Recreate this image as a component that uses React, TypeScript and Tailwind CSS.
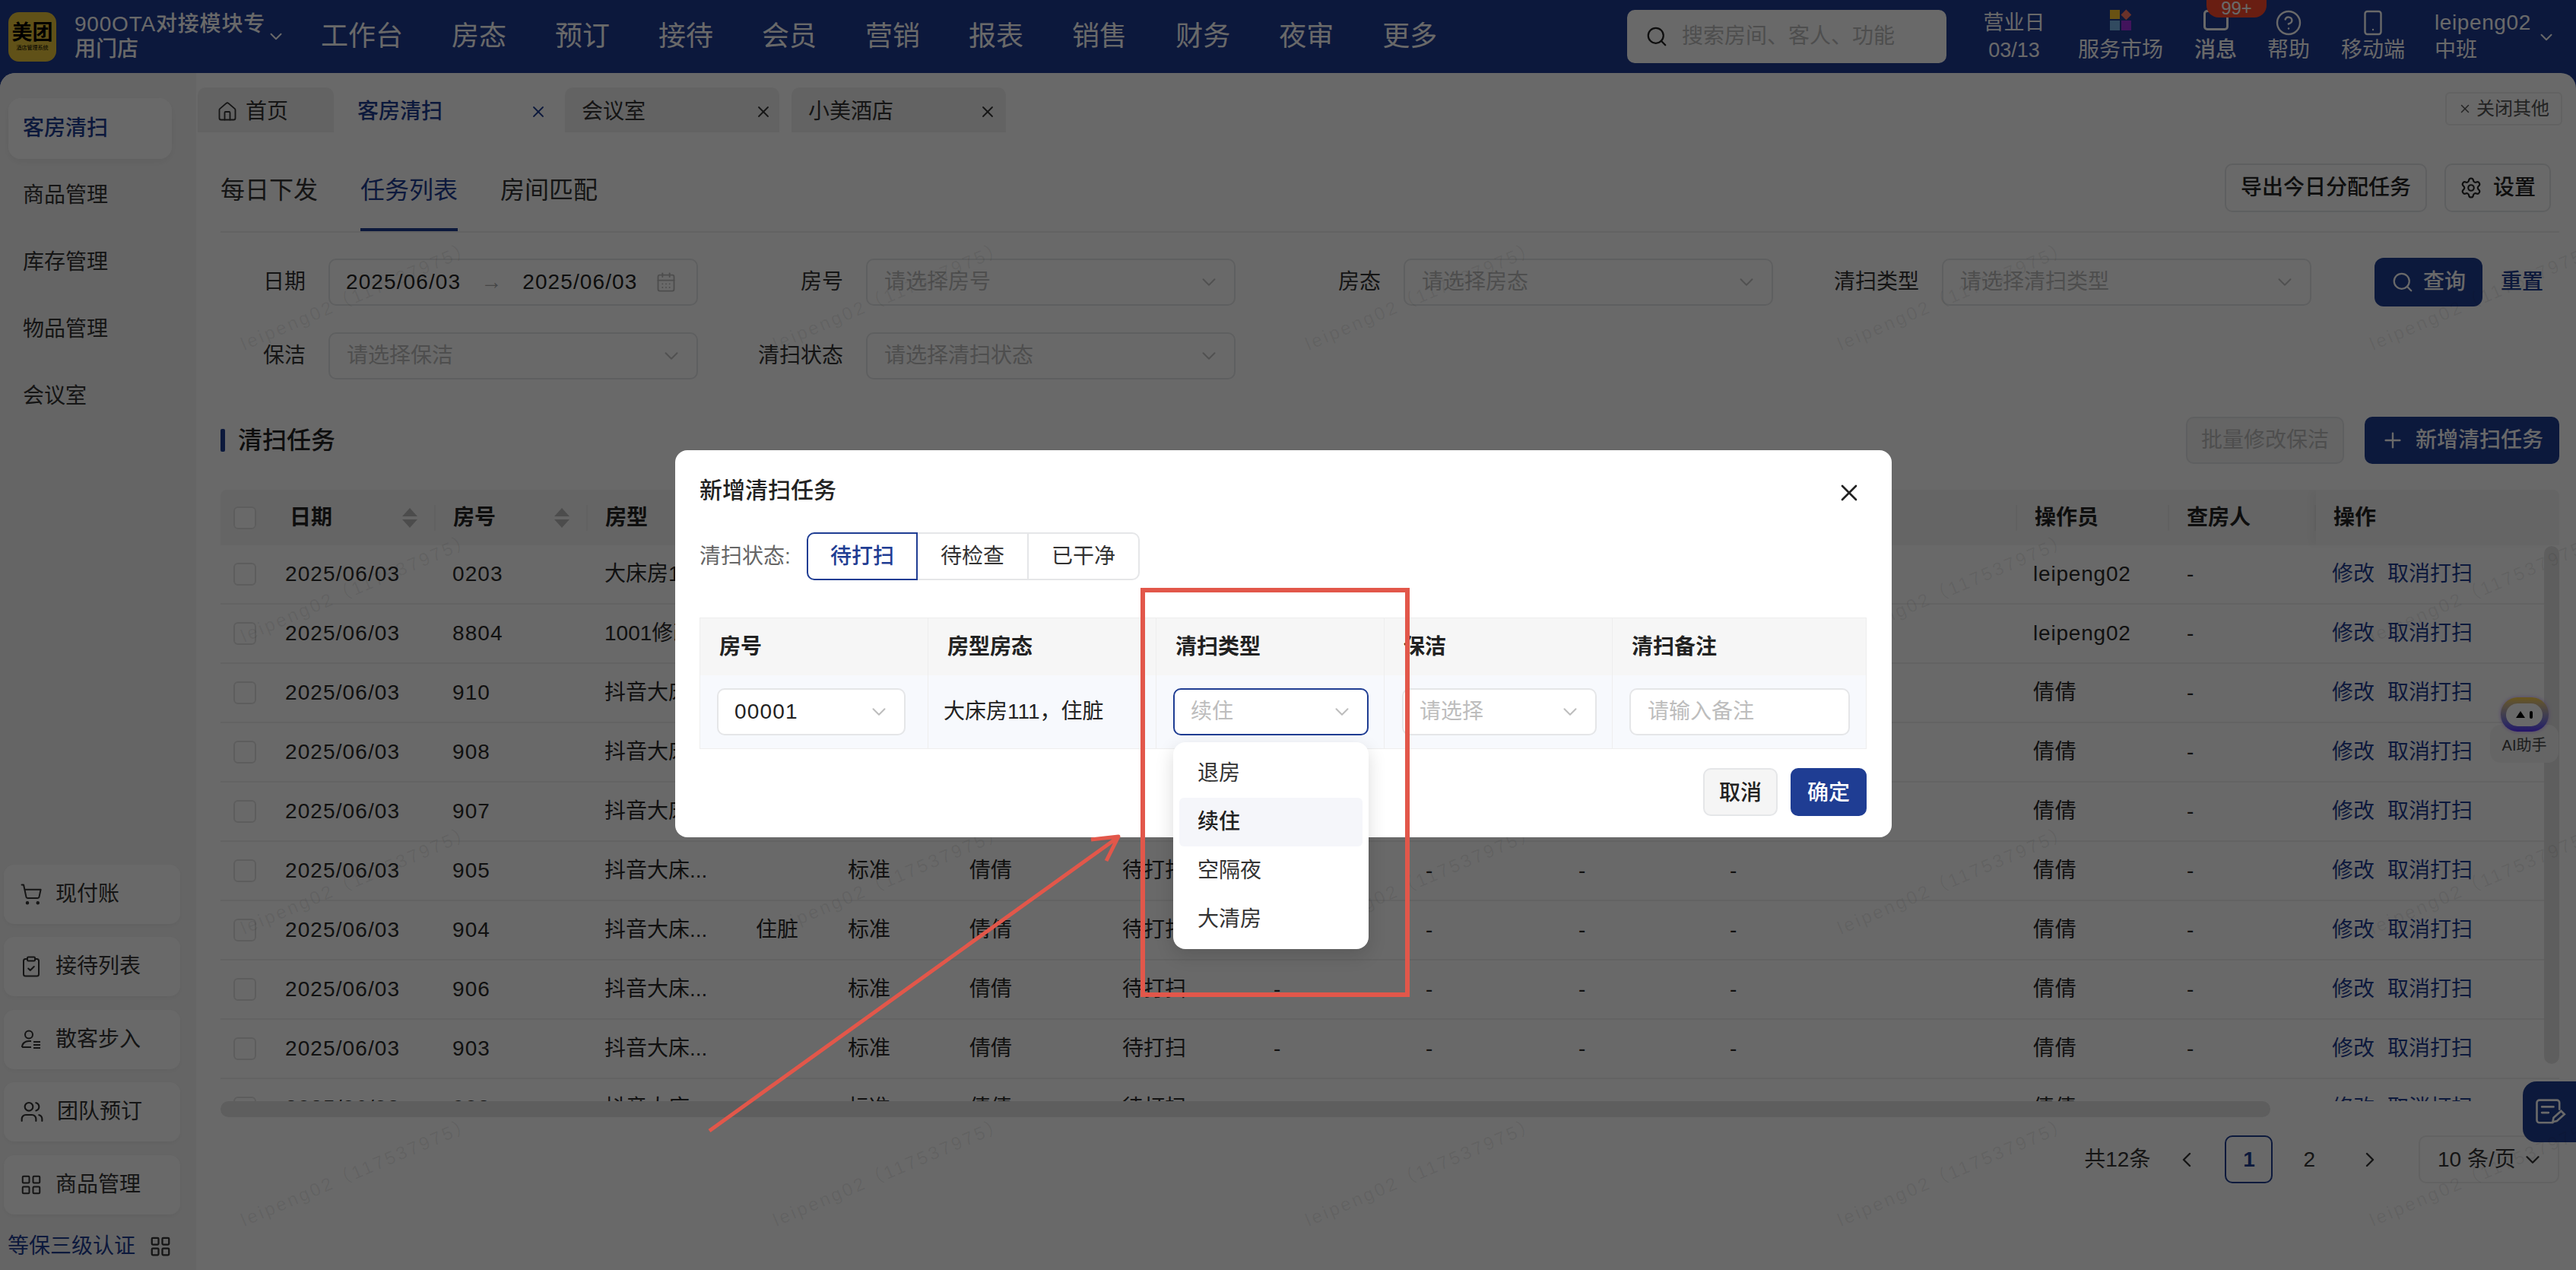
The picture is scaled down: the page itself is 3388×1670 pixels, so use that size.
import {
  ChevronDown,
  ChevronLeft,
  ChevronRight,
  CircleHelp,
  CalendarDays,
  ClipboardCheck,
  House,
  LayoutGrid,
  Plus,
  Search,
  Settings,
  ShoppingCart,
  Smartphone,
  Users,
  X,
} from "lucide-react";

const navItems = ["工作台", "房态", "预订", "接待", "会员", "营销", "报表", "销售", "财务", "夜审", "更多"];
const sideItems = ["客房清扫", "商品管理", "库存管理", "物品管理", "会议室"];
const rooms = [
  { date: "2025/06/03", no: "0203", type: "大床房111", state: "住脏", staff: "leipeng02" },
  { date: "2025/06/03", no: "8804", type: "1001修改", state: "", staff: "leipeng02" },
  { date: "2025/06/03", no: "910", type: "抖音大床...", state: "", staff: "倩倩" },
  { date: "2025/06/03", no: "908", type: "抖音大床...", state: "", staff: "倩倩" },
  { date: "2025/06/03", no: "907", type: "抖音大床...", state: "", staff: "倩倩" },
  { date: "2025/06/03", no: "905", type: "抖音大床...", state: "", staff: "倩倩" },
  { date: "2025/06/03", no: "904", type: "抖音大床...", state: "住脏", staff: "倩倩" },
  { date: "2025/06/03", no: "906", type: "抖音大床...", state: "", staff: "倩倩" },
  { date: "2025/06/03", no: "903", type: "抖音大床...", state: "", staff: "倩倩" },
  { date: "2025/06/03", no: "902", type: "抖音大床...", state: "", staff: "倩倩" },
];

const tableCols =
  "grid grid-cols-[68px_215px_200px_199px_121px_160px_201px_199px_200px_201px_199px_400px_200px_193px_320px]";

const Field = ({ label, placeholder }: { label: string; placeholder: string }) => (
  <div className="flex items-center justify-end gap-[30px]">
    <span className="text-[28px] text-[#333]">{label}</span>
    <div className="flex h-[62px] w-[486px] items-center justify-between rounded-[10px] border-2 border-[#e5e6e8] pl-[22px] pr-[18px] text-[28px] text-[#bdbdbd]">
      {placeholder}
      <ChevronDown className="h-[30px] w-[30px] text-[#c4c4c4]" strokeWidth={1.6} />
    </div>
  </div>
);

const SortIcon = () => (
  <span className="flex flex-col items-center gap-[4px]">
    <span className="h-0 w-0 border-x-[10px] border-b-[11px] border-x-transparent border-b-[#b9b9b9]" />
    <span className="h-0 w-0 border-x-[10px] border-t-[11px] border-x-transparent border-t-[#b9b9b9]" />
  </span>
);

const HeadCell = ({ label, sort, last }: { label?: string; sort?: boolean; last?: boolean }) => (
  <div
    className={`relative flex items-center justify-between pl-[23px] pr-[24px] text-[28px] font-bold text-[#222] ${
      last ? "shadow-[-10px_0_10px_rgba(0,0,0,0.03)]" : ""
    }`}
  >
    {label}
    {sort && <SortIcon />}
    {!last && <span className="absolute right-0 top-[20px] h-[34px] w-[2px] bg-[#ececec]" />}
  </div>
);

const SelectBox = ({ value, muted, active }: { value: string; muted?: boolean; active?: boolean }) => (
  <div
    className={`flex h-[62px] items-center justify-between rounded-[10px] border-2 bg-white pl-[21px] pr-[18px] text-[28px] ${
      active ? "border-[#1f3d93]" : "border-[#e5e6e8]"
    } ${muted ? "text-[#bdbdbd]" : "text-[#222]"}`}
  >
    <span className={muted ? "" : "tracking-[1.2px]"}>{value}</span>
    <ChevronDown className="h-[30px] w-[30px] text-[#bdbdbd]" strokeWidth={1.6} />
  </div>
);

export default function App() {
  return (
    <div className="relative h-[1670px] w-[3388px] overflow-hidden bg-[#1e3a93] font-['Liberation_Sans','Noto_Sans_CJK_SC',sans-serif]">
      {/* top bar */}
      <header className="flex h-[96px] items-center text-white">
        <div className="ml-[11px] flex h-[65px] w-[63px] flex-col items-center justify-center rounded-[14px] bg-[#e9c53a] text-black">
          <span className="text-[27px] font-bold leading-[30px]">美团</span>
          <span className="text-[7px] leading-[10px]">酒店管理系统</span>
        </div>
        <div className="ml-[24px] w-[262px] text-[28px] font-medium leading-[33px]">
          <div className="tracking-[0.8px]">900OTA对接模块专</div>
          <div>用门店</div>
        </div>
        <ChevronDown className="ml-[-10px] h-[26px] w-[26px]" strokeWidth={1.8} />
        <nav className="ml-[46px] flex gap-[64px] text-[36px]">
          {navItems.map((n) => (
            <span key={n}>{n}</span>
          ))}
        </nav>
        <div className="ml-auto flex h-[70px] w-[420px] items-center gap-[18px] rounded-[10px] bg-white pl-[24px] text-[28px] text-[#bdbdbd]">
          <Search className="h-[30px] w-[30px] text-[#222]" strokeWidth={1.8} />
          搜索房间、客人、功能
        </div>
        <div className="ml-[47px] flex w-[84px] flex-col items-center whitespace-nowrap text-[27px] leading-[36px]">
          <span>营业日</span>
          <span>03/13</span>
        </div>
        <div className="ml-[42px] flex w-[112px] flex-col items-center text-[28px]">
          <div className="grid h-[27px] w-[28px] grid-cols-2 gap-[2px]">
            <span className="bg-[#ffc72e]" />
            <span className="rotate-45 scale-75 bg-[#ff7a66]" />
            <span className="bg-[#78b4e8]" />
            <span className="bg-[#a030e0]" />
          </div>
          <span className="mt-[8px] leading-[36px]">服务市场</span>
        </div>
        <div className="relative ml-[40px] flex w-[58px] flex-col items-center text-[28px] font-medium">
          <div className="h-[27px] w-[33px] rounded-[5px] border-[3px] border-white" />
          <span className="absolute left-[17px] top-[-14px] flex h-[24px] w-[79px] items-center justify-center rounded-b-[16px] bg-[#ff4a2d] text-[24px]">
            99+
          </span>
          <span className="mt-[8px] leading-[36px]">消息</span>
        </div>
        <div className="ml-[39px] flex w-[56px] flex-col items-center text-[28px]">
          <CircleHelp className="h-[36px] w-[36px]" strokeWidth={1.6} />
          <span className="leading-[36px]">帮助</span>
        </div>
        <div className="ml-[41px] flex w-[84px] flex-col items-center text-[28px]">
          <Smartphone className="h-[36px] w-[36px]" strokeWidth={1.6} />
          <span className="leading-[36px]">移动端</span>
        </div>
        <div className="ml-[39px] w-[132px] text-[28px] leading-[36px]">
          <div className="tracking-[0.6px]">leipeng02</div>
          <div>中班</div>
        </div>
        <ChevronDown className="ml-[2px] mr-[26px] mt-[2px] h-[26px] w-[26px]" strokeWidth={1.8} />
      </header>

      <div className="flex h-[1574px] overflow-hidden rounded-t-[20px] bg-white">
        {/* left menu */}
        <aside className="flex w-[258px] shrink-0 flex-col justify-between bg-[#f6f6f6] pb-[10px] pl-[5px] pt-[33px]">
          <div className="flex flex-col gap-[8px]">
            {sideItems.map((s, i) => (
              <div
                key={s}
                className={`ml-[6px] flex h-[80px] w-[215px] items-center rounded-[16px] pl-[19px] text-[28px] ${
                  i === 0 ? "bg-white font-medium text-[#1f3d93] shadow-[0_4px_12px_rgba(0,0,0,0.06)]" : "text-[#333]"
                }`}
              >
                {s}
              </div>
            ))}
          </div>
          <div className="flex flex-col">
            {[
              { t: "现付账", icon: <ShoppingCart className="h-[30px] w-[30px]" strokeWidth={1.6} /> },
              { t: "接待列表", icon: <ClipboardCheck className="h-[30px] w-[30px]" strokeWidth={1.6} /> },
              {
                t: "散客步入",
                icon: (
                  <svg viewBox="0 0 30 30" className="h-[30px] w-[30px]" fill="none" stroke="currentColor" strokeWidth="2">
                    <circle cx="12" cy="8.5" r="5" />
                    <path d="M3 25c0-5 4-8 9-8h3M18 18h9M18 22h9M18 26h9M3 25h12" />
                  </svg>
                ),
              },
              { t: "团队预订", icon: <Users className="h-[32px] w-[32px]" strokeWidth={1.6} /> },
              { t: "商品管理", icon: <LayoutGrid className="h-[30px] w-[30px]" strokeWidth={1.6} /> },
            ].map((b) => (
              <div
                key={b.t}
                className="mb-[17.5px] flex h-[78px] w-[232px] items-center gap-[17px] rounded-[14px] bg-white pl-[21px] text-[28px] text-[#333] shadow-[0_2px_8px_rgba(0,0,0,0.05)]"
              >
                {b.icon}
                {b.t}
              </div>
            ))}
            <div className="ml-[5px] mt-[4px] flex items-center gap-[18px] text-[28px] text-[#1f3d93]">
              等保三级认证
              <LayoutGrid className="h-[30px] w-[30px] text-[#333]" strokeWidth={1.8} />
            </div>
          </div>
        </aside>

        <main className="relative min-w-0 flex-1">
          {/* page tabs */}
          <div className="flex h-[78px] items-end justify-between pl-[2px] pr-[18px]">
            <div className="flex text-[28px] text-[#333]">
              <div className="flex h-[59px] w-[179px] items-center gap-[10px] rounded-t-[10px] bg-[#f1f1f1] pl-[25px] pt-[4px]">
                <House className="h-[28px] w-[28px]" strokeWidth={1.6} />
                首页
              </div>
              <div className="ml-[6px] flex h-[59px] w-[292px] items-center justify-between rounded-t-[10px] bg-white pl-[25px] pr-[17px] pt-[4px] font-medium text-[#1f3d93]">
                客房清扫
                <X className="h-[24px] w-[24px]" strokeWidth={1.8} />
              </div>
              <div className="ml-[6px] flex h-[59px] w-[282px] items-center justify-between rounded-t-[10px] bg-[#f1f1f1] pl-[22px] pr-[9px] pt-[4px]">
                会议室
                <X className="h-[24px] w-[24px]" strokeWidth={1.8} />
              </div>
              <div className="ml-[16px] flex h-[59px] w-[282px] items-center justify-between rounded-t-[10px] bg-[#f1f1f1] pl-[22px] pr-[12px] pt-[4px]">
                小美酒店
                <X className="h-[24px] w-[24px]" strokeWidth={1.8} />
              </div>
            </div>
            <div className="mb-[9px] flex h-[44px] w-[154px] items-center justify-center gap-[6px] rounded-[6px] border-2 border-[#eeeeee] text-[24px] text-[#555]">
              <X className="h-[18px] w-[18px]" strokeWidth={2} />
              关闭其他
            </div>
          </div>

          <div className="pl-[32px] pr-[22px]">
            {/* sub tabs */}
            <div className="flex h-[132px] items-end justify-between border-b-2 border-[#eeeeee]">
              <div className="flex gap-[56px] text-[32px] text-[#333]">
                <span className="pb-[30px] leading-[48px]">每日下发</span>
                <span className="border-b-4 border-[#1f3d93] pb-[26px] leading-[48px] text-[#1f3d93]">任务列表</span>
                <span className="pb-[30px] leading-[48px]">房间匹配</span>
              </div>
              <div className="mb-[25px] mr-[11px] flex gap-[23px] text-[28px] text-[#222]">
                <div className="flex h-[64px] w-[266px] items-center justify-center rounded-[10px] border-2 border-[#e5e6e8] font-medium">
                  导出今日分配任务
                </div>
                <div className="flex h-[64px] w-[140px] items-center justify-center gap-[14px] rounded-[10px] border-2 border-[#e5e6e8] font-medium">
                  <Settings className="h-[30px] w-[30px]" strokeWidth={1.7} />
                  设置
                </div>
              </div>
            </div>

            {/* filters */}
            <div className="mt-[33px] grid grid-cols-[628px_707px_707px_708px_auto] gap-y-[34px]">
              <div className="flex items-center justify-end gap-[30px]">
                <span className="text-[28px] text-[#333]">日期</span>
                <div className="flex h-[62px] w-[486px] items-center rounded-[10px] border-2 border-[#e5e6e8] pl-[21px] text-[28px] tracking-[1.1px] text-[#222]">
                  2025/06/03
                  <span className="mx-[26px] text-[#aaa]">→</span>
                  2025/06/03
                  <CalendarDays className="ml-[24px] h-[28px] w-[28px] text-[#bbb]" strokeWidth={1.6} />
                </div>
              </div>
              <Field label="房号" placeholder="请选择房号" />
              <Field label="房态" placeholder="请选择房态" />
              <Field label="清扫类型" placeholder="请选择清扫类型" />
              <div className="flex items-center pl-[83px]">
                <div className="flex h-[64px] w-[142px] items-center justify-center gap-[12px] rounded-[12px] bg-[#1f3d93] text-[28px] font-medium text-white">
                  <Search className="h-[30px] w-[30px]" strokeWidth={1.8} />
                  查询
                </div>
                <span className="ml-[24px] text-[28px] font-medium text-[#1f3d93]">重置</span>
              </div>
              <Field label="保洁" placeholder="请选择保洁" />
              <Field label="清扫状态" placeholder="请选择清扫状态" />
            </div>

            {/* section title */}
            <div className="mt-[49px] flex h-[62px] items-center justify-between">
              <div className="flex items-center gap-[17px] text-[32px] font-medium text-[#222]">
                <span className="h-[30px] w-[6px] rounded-[2px] bg-[#1f3d93]" />
                清扫任务
              </div>
              <div className="flex gap-[27px] text-[28px]">
                <div className="flex h-[62px] w-[208px] items-center justify-center rounded-[10px] border-2 border-[#e5e6e8] bg-[#f5f5f5] text-[#bdbdbd]">
                  批量修改保洁
                </div>
                <div className="flex h-[62px] w-[256px] items-center justify-center gap-[14px] rounded-[10px] bg-[#1f3d93] font-medium text-white">
                  <Plus className="h-[32px] w-[32px]" strokeWidth={1.8} />
                  新增清扫任务
                </div>
              </div>
            </div>

            {/* tasks table */}
            <div className="relative mt-[34px]">
              <div className="h-[804px] overflow-hidden">
                <div className={`${tableCols} h-[73px] rounded-t-[8px] bg-[#f6f6f6]`}>
                  <div className="flex items-center pl-[17px]">
                    <span className="h-[30px] w-[30px] rounded-[6px] border-2 border-[#e3e3e3] bg-white" />
                  </div>
                  <HeadCell label="日期" sort />
                  <HeadCell label="房号" sort />
                  <HeadCell label="房型" />
                  <HeadCell label="房态" />
                  <HeadCell label="清洁标准" />
                  <HeadCell label="保洁" />
                  <HeadCell label="状态" />
                  <HeadCell label="开始时间" />
                  <HeadCell label="结束时间" />
                  <HeadCell label="用时" />
                  <HeadCell label="清扫备注" />
                  <HeadCell label="操作员" />
                  <HeadCell label="查房人" />
                  <HeadCell label="操作" last />
                </div>
                {rooms.map((r) => (
                  <div
                    key={r.no}
                    className={`${tableCols} h-[78px] items-center border-b-2 border-[#f0f0f0] text-[28px] text-[#2a2a2a]`}
                  >
                    <div className="pl-[17px]">
                      <span className="block h-[30px] w-[30px] rounded-[6px] border-2 border-[#e3e3e3]" />
                    </div>
                    <div className="pl-[17px] tracking-[1.1px]">{r.date}</div>
                    <div className="pl-[22px] tracking-[1.1px]">{r.no}</div>
                    <div className="pl-[22px]">{r.type}</div>
                    <div className="pl-[22px]">{r.state}</div>
                    <div className="pl-[22px]">标准</div>
                    <div className="pl-[22px]">倩倩</div>
                    <div className="pl-[22px]">待打扫</div>
                    <div className="pl-[22px]">-</div>
                    <div className="pl-[22px]">-</div>
                    <div className="pl-[22px]">-</div>
                    <div className="pl-[22px]">-</div>
                    <div className="pl-[21px] tracking-[0.8px]">{r.staff}</div>
                    <div className="pl-[23px]">-</div>
                    <div className="flex gap-[17px] pl-[21px] text-[#1f3d93]">
                      <span>修改</span>
                      <span>取消打扫</span>
                    </div>
                  </div>
                ))}
              </div>
              {/* vertical scrollbar */}
              <div className="absolute right-0 top-[74px] h-[681px] w-[20px] rounded-full bg-[#e4e4e4]" />
              {/* horizontal scrollbar */}
              <div className="h-[21px] w-[2696px] rounded-full bg-[#e4e4e4]" />
            </div>

            {/* pagination */}
            <div className="mt-[24px] flex h-[63px] items-center justify-end text-[28px] text-[#333]">
              <span>共12条</span>
              <ChevronLeft className="ml-[32px] h-[32px] w-[32px]" strokeWidth={1.8} />
              <span className="ml-[34px] flex h-[63px] w-[63px] items-center justify-center rounded-[10px] border-2 border-[#1f3d93] font-bold text-[#1f3d93]">
                1
              </span>
              <span className="ml-[40px]">2</span>
              <ChevronRight className="ml-[56px] h-[32px] w-[32px]" strokeWidth={1.8} />
              <div className="ml-[48px] flex h-[63px] w-[185px] items-center justify-between rounded-[10px] border-2 border-[#eeeeee] pl-[23px] pr-[18px]">
                10 条/页
                <ChevronDown className="h-[30px] w-[30px]" strokeWidth={1.8} />
              </div>
            </div>
          </div>

          {/* AI helper */}
          <div className="absolute right-[23px] top-[857px] flex h-[50px] w-[90px] items-end justify-center rounded-[14px] bg-[#f6f6f6] pb-[8px] text-[20px] text-[#444]">
            AI助手
            <div className="absolute top-[-36px] flex h-[45px] w-[63px] items-center justify-center rounded-[22px] bg-linear-to-b from-[#ffd23f] to-[#5b2cff] shadow-[0_0_5px_rgba(180,120,255,0.7)]">
              <div className="flex h-[30px] w-[48px] items-center justify-center gap-[6px] rounded-[15px] bg-white">
                <span className="h-0 w-0 border-x-[6px] border-b-[9px] border-x-transparent border-b-black" />
                <span className="h-[10px] w-[4px] rounded-full bg-black" />
              </div>
            </div>
          </div>
          {/* feedback */}
          <div className="absolute right-0 top-[1326px] flex h-[80px] w-[70px] items-center justify-center rounded-l-[18px] bg-[#1f3d93] text-white">
            <svg viewBox="0 0 40 40" className="h-[44px] w-[44px]" fill="none" stroke="currentColor" strokeWidth="2.4" strokeLinecap="round">
              <path d="M24 33H8a3 3 0 0 1-3-3V9a3 3 0 0 1 3-3h21a3 3 0 0 1 3 3v8" />
              <path d="M11 14h14M11 21h8" />
              <path d="M24 32l1-5 9-8 4 4-9 8z" />
            </svg>
          </div>
        </main>
      </div>

      {/* watermark */}
      <div className="pointer-events-none absolute inset-0 grid grid-cols-[repeat(5,700px)] auto-rows-[384px] overflow-hidden pl-[120px] pt-[197px] text-[24px] tracking-[3px] text-black/[.08]">
        {Array.from({ length: 20 }).map((_, i) => (
          <div key={i} className="flex -rotate-[23deg] items-center justify-center whitespace-nowrap">
            leipeng02（117537975）
          </div>
        ))}
      </div>

      {/* dim layer */}
      <div className="absolute inset-0 bg-black/[.59]" />

      {/* dialog */}
      <div className="absolute left-[888px] top-[592px] h-[509px] w-[1600px] rounded-[16px] bg-white pl-[32px] pr-[33px] pt-[32px]">
        <div className="flex h-[40px] items-center justify-between">
          <span className="text-[30px] font-medium text-[#222]">新增清扫任务</span>
          <X className="mr-[5px] mt-[8px] h-[36px] w-[36px] text-[#222]" strokeWidth={1.8} />
        </div>
        <div className="mt-[36px] flex items-center">
          <span className="w-[141px] text-[28px] text-[#666]">清扫状态:</span>
          <div className="flex h-[63px] text-[28px] text-[#333]">
            <span className="flex w-[146px] items-center justify-center rounded-l-[10px] border-2 border-[#1f3d93] font-medium text-[#1f3d93]">
              待打扫
            </span>
            <span className="flex w-[146px] items-center justify-center border-y-2 border-r-2 border-[#e5e6e8]">待检查</span>
            <span className="flex w-[146px] items-center justify-center rounded-r-[10px] border-y-2 border-r-2 border-[#e5e6e8]">
              已干净
            </span>
          </div>
        </div>
        <div className="mt-[49px] border border-[#eeeeee]">
          <div className="grid h-[75px] grid-cols-[300px_300px_300px_300px_333px] bg-[#f6f6f6] text-[28px] font-bold text-[#222]">
            {["房号", "房型房态", "清扫类型", "保洁", "清扫备注"].map((h) => (
              <div key={h} className="flex items-center border-r border-[#eeeeee] pl-[25px] last:border-r-0">
                {h}
              </div>
            ))}
          </div>
          <div className="grid h-[96px] grid-cols-[300px_300px_300px_300px_333px] items-center bg-[#f7f9fd] text-[28px]">
            <div className="flex h-full flex-col justify-center border-r border-[#eeeeee] pl-[22px] pr-[29px]">
              <SelectBox value="00001" />
            </div>
            <div className="flex h-full items-center border-r border-[#eeeeee] pl-[20px] text-[#222]">大床房111，住脏</div>
            <div className="relative flex h-full flex-col justify-center border-r border-[#eeeeee] pl-[22px] pr-[20px]">
              <SelectBox value="续住" muted active />
              {/* dropdown */}
              <div className="absolute left-[22px] top-[88px] z-10 h-[272px] w-[257px] rounded-[16px] bg-white px-[8px] pt-[9px] text-[28px] text-[#333] shadow-[0_8px_24px_rgba(0,0,0,0.14)]">
                <div className="flex h-[64px] items-center pl-[24px]">退房</div>
                <div className="flex h-[64px] items-center rounded-[6px] bg-[#f5f6fa] pl-[24px] font-medium text-[#222]">续住</div>
                <div className="flex h-[64px] items-center pl-[24px]">空隔夜</div>
                <div className="flex h-[64px] items-center pl-[24px]">大清房</div>
              </div>
            </div>
            <div className="flex h-full flex-col justify-center border-r border-[#eeeeee] pl-[23px] pr-[20px]">
              <SelectBox value="请选择" muted />
            </div>
            <div className="flex h-full items-center pl-[22px] pr-[21px]">
              <div className="flex h-[62px] w-full items-center rounded-[10px] border-2 border-[#e5e6e8] bg-white pl-[22px] text-[#bdbdbd]">
                请输入备注
              </div>
            </div>
          </div>
        </div>
        <div className="mt-[25px] flex justify-end gap-[17px] text-[28px]">
          <span className="flex h-[63px] w-[98px] items-center justify-center rounded-[10px] border-2 border-[#e5e6e8] bg-[#f5f5f5] pt-[2px] font-medium text-[#222]">
            取消
          </span>
          <span className="flex h-[63px] w-[100px] items-center justify-center rounded-[10px] bg-[#1f3d93] pt-[2px] font-medium text-white">
            确定
          </span>
        </div>
      </div>

      {/* red annotation */}
      <svg viewBox="0 0 3388 1670" className="pointer-events-none absolute inset-0 h-[1670px] w-[3388px]" fill="none" stroke="#e2574a">
        <rect x="1503" y="776" width="348" height="532" strokeWidth="6" />
        <path d="M933 1487L1469 1102M1435 1104L1471 1100L1455 1132" strokeWidth="5" strokeLinejoin="round" />
      </svg>
    </div>
  );
}
